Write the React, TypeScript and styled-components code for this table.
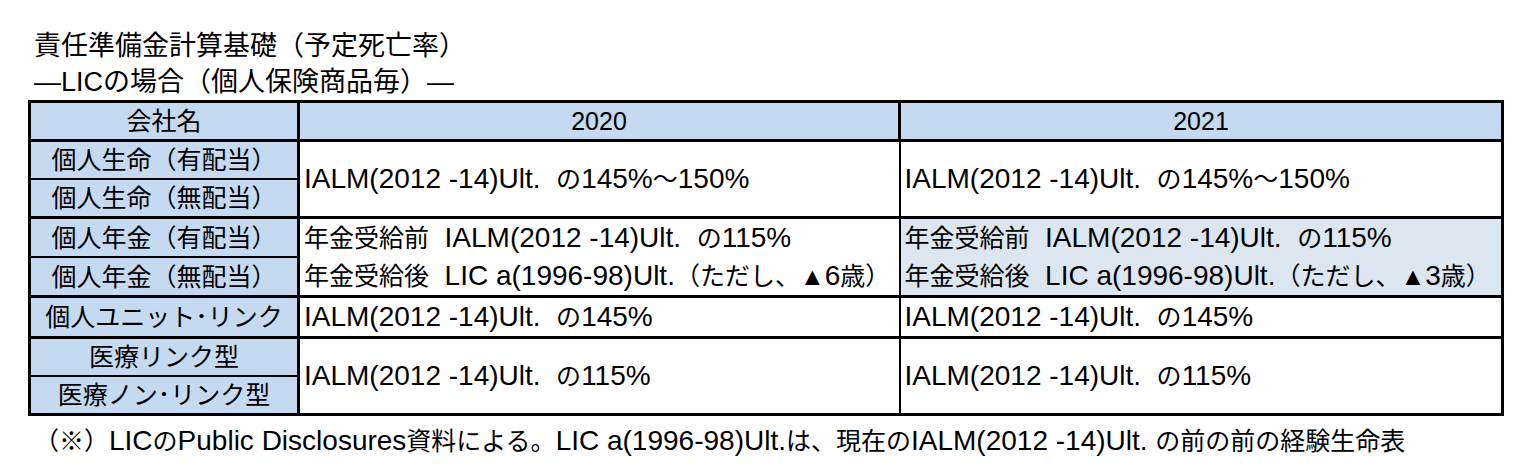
import React from 'react';
import styled, { createGlobalStyle } from 'styled-components';

const GlobalStyle = createGlobalStyle`
  html, body {
    margin: 0;
    padding: 0;
    background: #ffffff;
  }
  body {
    font-family: "Liberation Sans", "Noto Sans CJK JP", sans-serif;
    color: #000000;
  }
`;

const Page = styled.div`
  padding: 28px 0 0 28px;
  width: 1504px;
`;

const Title = styled.div`
  padding-left: 6px;
  font-size: 27px;
  line-height: 36px;
  white-space: nowrap;
`;

const Table = styled.table`
  border-collapse: collapse;
  table-layout: fixed;
  width: 1473px;
  border: 3px solid #000;
  font-size: 25px;
`;

const HeadCell = styled.th<{ $thinRight?: boolean }>`
  height: 36px;
  padding: 0;
  font-weight: normal;
  text-align: center;
  background: #c5d9f1;
  border: 3px solid #000;
  border-right-width: ${({ $thinRight }) => ($thinRight ? '2px' : '3px')};
  line-height: 36px;
  white-space: nowrap;
`;

const Row = styled.tr<{ $groupStart?: boolean }>`
  & > td {
    border-top: ${({ $groupStart }) => ($groupStart ? '3px' : '2px')} solid #000;
  }
`;

const LabelCell = styled.td`
  height: 36px;
  padding: 0;
  text-align: center;
  background: #c5d9f1;
  border-left: 3px solid #000;
  border-right: 3px solid #000;
  border-bottom: 2px solid #000;
  line-height: 36px;
  white-space: nowrap;
`;

const ValueCell = styled.td<{ $shade?: boolean; $last?: boolean }>`
  padding: 0 4px 0 4px;
  text-align: left;
  vertical-align: middle;
  background: ${({ $shade }) => ($shade ? '#dce6f1' : '#ffffff')};
  border-right: ${({ $last }) => ($last ? '3px' : '2px')} solid #000;
  border-bottom: 3px solid #000;
  white-space: pre;
`;

const ValueLine = styled.div`
  line-height: 38px;
`;

// the Latin runs of the source font are set larger than its kana/kanji
const Latin = styled.span`
  font-size: 28px;
`;

const Note = styled.div`
  padding-left: 6px;
  margin-top: 7px;
  font-size: 25px;
  line-height: 36px;
  white-space: pre;
`;

const Mixed: React.FC<{ text: string }> = ({ text }) => (
  <>
    {text.split(/([A-Za-z0-9().%\- ]+)/).map((part, i) =>
      i % 2 === 1 ? <Latin key={i}>{part}</Latin> : part
    )}
  </>
);

type Group = {
  labels: string[];
  y2020: string[];
  y2021: string[];
  shade2021?: boolean;
};

const groups: Group[] = [
  {
    labels: ['個人生命（有配当）', '個人生命（無配当）'],
    y2020: ['IALM(2012 -14)Ult.  の145%～150%'],
    y2021: ['IALM(2012 -14)Ult.  の145%～150%'],
  },
  {
    labels: ['個人年金（有配当）', '個人年金（無配当）'],
    y2020: ['年金受給前  IALM(2012 -14)Ult.  の115%', '年金受給後  LIC a(1996-98)Ult.（ただし、▲6歳）'],
    y2021: ['年金受給前  IALM(2012 -14)Ult.  の115%', '年金受給後  LIC a(1996-98)Ult.（ただし、▲3歳）'],
    shade2021: true,
  },
  {
    labels: ['個人ユニット･リンク'],
    y2020: ['IALM(2012 -14)Ult.  の145%'],
    y2021: ['IALM(2012 -14)Ult.  の145%'],
  },
  {
    labels: ['医療リンク型', '医療ノン･リンク型'],
    y2020: ['IALM(2012 -14)Ult.  の115%'],
    y2021: ['IALM(2012 -14)Ult.  の115%'],
  },
];

const App: React.FC = () => {
  return (
    <>
      <GlobalStyle />
      <Page>
        <Title>
          <div>責任準備金計算基礎（予定死亡率）</div>
          <div>—LICの場合（個人保険商品毎）—</div>
        </Title>
        <Table>
          <colgroup>
            <col style={{ width: 269 }} />
            <col style={{ width: 601 }} />
            <col style={{ width: 603 }} />
          </colgroup>
          <thead>
            <tr>
              <HeadCell>会社名</HeadCell>
              <HeadCell $thinRight>2020</HeadCell>
              <HeadCell>2021</HeadCell>
            </tr>
          </thead>
          <tbody>
            {groups.map((g) =>
              g.labels.map((label, i) => (
                <Row key={label} $groupStart={i === 0}>
                  <LabelCell>{label}</LabelCell>
                  {i === 0 && (
                    <>
                      <ValueCell rowSpan={g.labels.length}>
                        {g.y2020.map((line) => (
                          <ValueLine key={line}>
                            <Mixed text={line} />
                          </ValueLine>
                        ))}
                      </ValueCell>
                      <ValueCell rowSpan={g.labels.length} $shade={g.shade2021} $last>
                        {g.y2021.map((line) => (
                          <ValueLine key={line}>
                            <Mixed text={line} />
                          </ValueLine>
                        ))}
                      </ValueCell>
                    </>
                  )}
                </Row>
              ))
            )}
          </tbody>
        </Table>
        <Note>
          <Mixed text="（※）LICのPublic Disclosures資料による。LIC a(1996-98)Ult.は、現在のIALM(2012 -14)Ult. の前の前の経験生命表" />
        </Note>
      </Page>
    </>
  );
};

export default App;
